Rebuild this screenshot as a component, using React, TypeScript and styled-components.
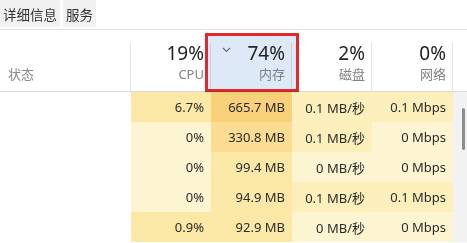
import styled, { createGlobalStyle } from "styled-components";

const GlobalStyle = createGlobalStyle`
  body {
    margin: 0;
    background: #ffffff;
    font-family: "Noto Sans", "Noto Sans CJK SC", sans-serif;
    color: #2b2b2b;
  }
`;

type Heat = 0 | 1 | 2 | 3 | 4;

const heatColors = ["#fdf5d2", "#fcefbc", "#fbe8a6", "#fbdc92", "#f9d07a"];

type Row = { cells: [string, Heat][] };

const rows: Row[] = [
  { cells: [["6.7%", 2], ["665.7 MB", 4], ["0.1 MB/秒", 1], ["0.1 Mbps", 1]] },
  { cells: [["0%", 0], ["330.8 MB", 3], ["0.1 MB/秒", 1], ["0 Mbps", 0]] },
  { cells: [["0%", 0], ["99.4 MB", 2], ["0 MB/秒", 0], ["0 Mbps", 0]] },
  { cells: [["0%", 0], ["94.9 MB", 2], ["0.1 MB/秒", 1], ["0.1 Mbps", 1]] },
  { cells: [["0.9%", 2], ["92.9 MB", 2], ["0 MB/秒", 0], ["0 Mbps", 0]] },
];

const columns = [
  { percent: "19%", label: "CPU", width: 80 },
  { percent: "74%", label: "内存", width: 81, sorted: true },
  { percent: "2%", label: "磁盘", width: 80 },
  { percent: "0%", label: "网络", width: 81 },
];

const App = () => {
  return (
    <Page>
      <GlobalStyle />
      <TabBar>
        <Tab>详细信息</Tab>
        <Tab>服务</Tab>
      </TabBar>
      <Header>
        <StatusHead>状态</StatusHead>
        {columns.map((col) => (
          <HeadCell key={col.label} $width={col.width}>
            {col.sorted && (
              <>
                <SortBox />
                <Chevron width="9" height="6" viewBox="0 0 9 6">
                  <polyline points="1,1 4.5,4.5 8,1" fill="none" stroke="#6b6b6b" strokeWidth="1.1" />
                </Chevron>
              </>
            )}
            <Percent>{col.percent}</Percent>
            <HeadLabel>{col.label}</HeadLabel>
          </HeadCell>
        ))}
        <HeadSpacer />
      </Header>
      <Body>
        <Rows>
          {rows.map((row, i) => (
            <DataRow key={i}>
              <StatusCell />
              {row.cells.map(([value, heat], j) => (
                <DataCell key={j} $width={columns[j].width} $heat={heat}>
                  {value}
                </DataCell>
              ))}
            </DataRow>
          ))}
        </Rows>
        <ScrollTrack>
          <ScrollThumb />
        </ScrollTrack>
      </Body>
    </Page>
  );
};

const Page = styled.div`
  width: 467px;
  height: 243px;
  overflow: hidden;
`;

const TabBar = styled.div`
  display: flex;
  gap: 3px;
  height: 29px;
  border-bottom: 1px solid #e2e2e2;
`;

const Tab = styled.div`
  display: flex;
  align-items: center;
  height: 27px;
  padding: 0 3px;
  background: #f1f1f1;
  font-size: 13.5px;
  color: #333;
`;

const Header = styled.div`
  display: flex;
  height: 61px;
  border-bottom: 1px solid #d9d9d9;
`;

const StatusHead = styled.div`
  width: 131px;
  flex-shrink: 0;
  display: flex;
  align-items: flex-end;
  padding: 0 0 8px 8px;
  box-sizing: border-box;
  font-size: 13px;
  color: #8a8a8a;
  position: relative;
  &::after {
    content: "";
    position: absolute;
    right: 0;
    top: 13px;
    bottom: 0;
    width: 1px;
    background: #e4e4e4;
  }
`;

const HeadCell = styled.div<{ $width: number }>`
  width: ${(p) => p.$width}px;
  flex-shrink: 0;
  position: relative;
  display: flex;
  flex-direction: column;
  align-items: flex-end;
  padding: 11px 7px 0 0;
  box-sizing: border-box;
  &::after {
    content: "";
    position: absolute;
    right: 0;
    top: 13px;
    bottom: 0;
    width: 1px;
    background: #e4e4e4;
  }
`;

const SortBox = styled.div`
  position: absolute;
  left: -6px;
  right: -7px;
  top: 3px;
  bottom: -1px;
  border: 3px solid #e0292d;
  background: #dde9f7;
  z-index: 2;
  pointer-events: none;
  mix-blend-mode: multiply;
`;

const Chevron = styled.svg`
  position: absolute;
  left: 11px;
  top: 17px;
  z-index: 3;
`;

const Percent = styled.div`
  font-size: 19px;
  line-height: 24px;
  color: #222;
  position: relative;
  z-index: 3;
`;

const HeadLabel = styled.div`
  font-size: 13px;
  line-height: 19px;
  color: #808080;
  position: relative;
  z-index: 3;
`;

const HeadSpacer = styled.div`
  flex: 1;
`;

const Body = styled.div`
  display: flex;
`;

const Rows = styled.div`
  display: flex;
  flex-direction: column;
  width: 453px;
`;

const DataRow = styled.div`
  display: flex;
  height: 30px;
`;

const StatusCell = styled.div`
  width: 131px;
  flex-shrink: 0;
`;

const DataCell = styled.div<{ $width: number; $heat: Heat }>`
  width: ${(p) => p.$width}px;
  flex-shrink: 0;
  display: flex;
  align-items: center;
  justify-content: flex-end;
  padding-right: 7px;
  box-sizing: border-box;
  background: ${(p) => heatColors[p.$heat]};
  font-size: 13px;
  color: #2b2b2b;
`;

const ScrollTrack = styled.div`
  flex: 1;
  background: #f2f2f2;
  padding-top: 16px;
`;

const ScrollThumb = styled.div`
  width: 2.5px;
  height: 42px;
  margin-left: 9px;
  border-radius: 2px;
  background: #8c8c8c;
`;

export default App;
